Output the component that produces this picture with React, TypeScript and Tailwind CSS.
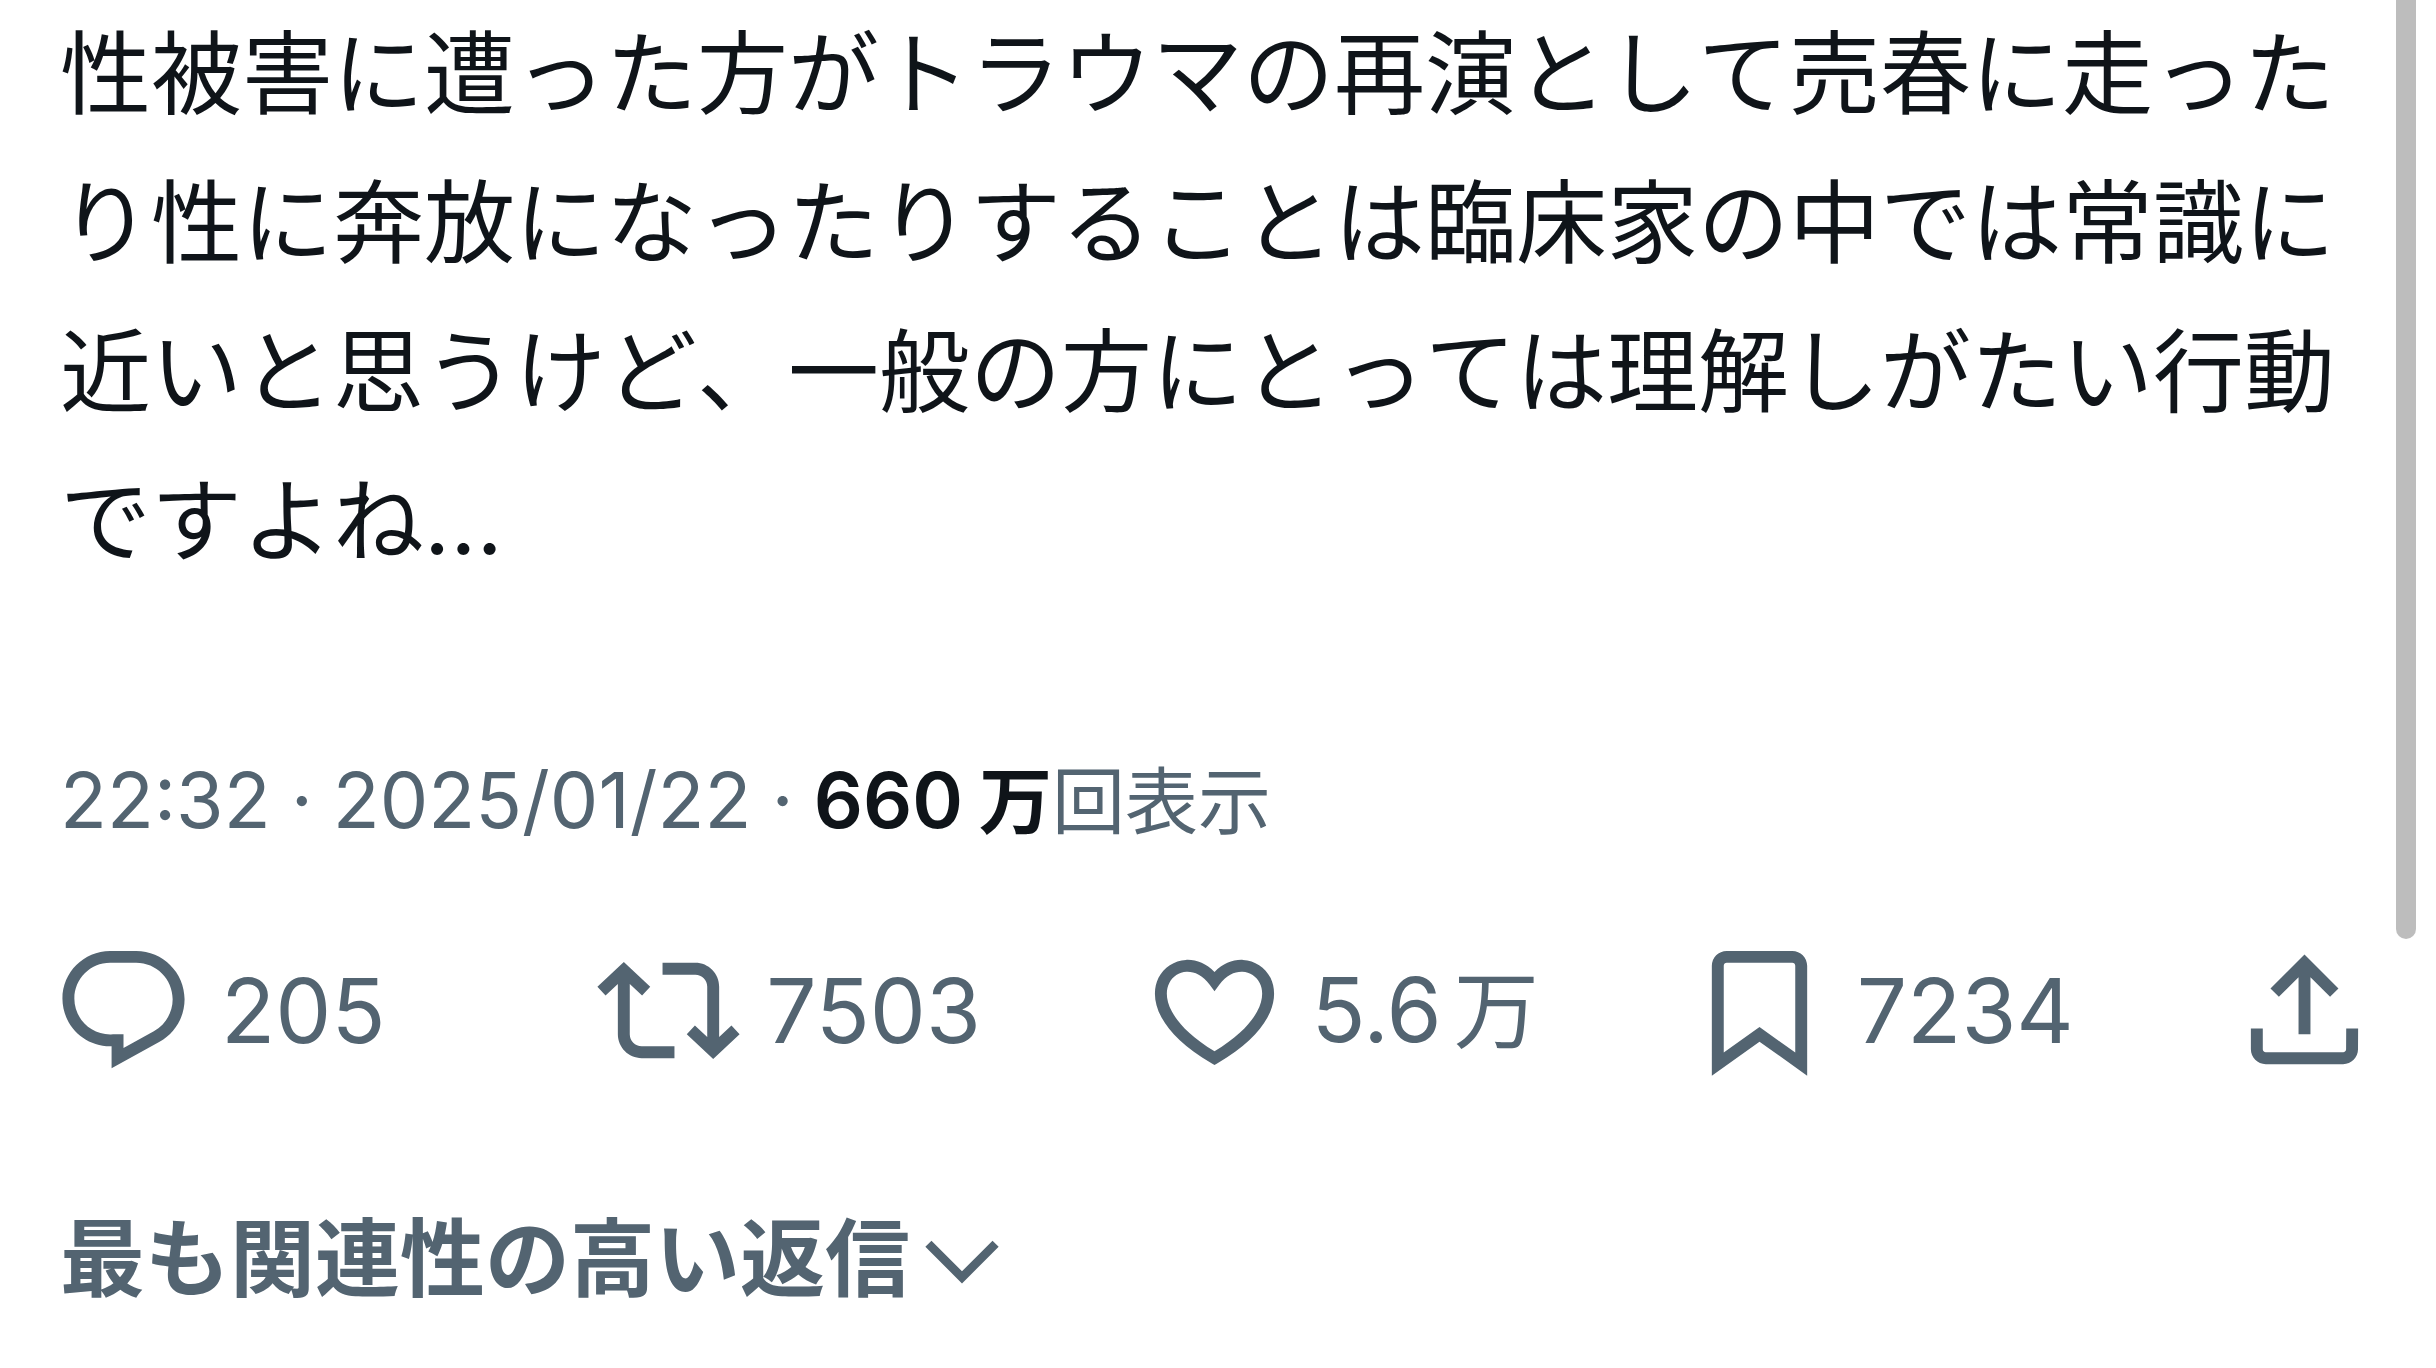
import { clsx } from 'clsx'

const ICONS = {
    reply: 'M1.751 10c0-4.42 3.584-8 8.005-8h4.366c4.49 0 8.129 3.64 8.129 8.13 0 2.96-1.607 5.68-4.196 7.11l-8.054 4.46v-3.69h-.067c-4.49.1-8.183-3.51-8.183-8.01zm8.005-6c-3.317 0-6.005 2.69-6.005 6 0 3.37 2.77 6.08 6.138 6.01l.351-.01h1.761v2.3l5.087-2.81c1.951-1.08 3.163-3.13 3.163-5.36 0-3.39-2.744-6.13-6.129-6.13H9.756z',
    repost: 'M4.5 3.88l4.432 4.14-1.364 1.46L5.5 7.55V16c0 1.1.896 2 2 2H13v2H7.5c-2.209 0-4-1.79-4-4V7.55L1.432 9.48.068 8.02 4.5 3.88zM16.5 6H11V4h5.5c2.209 0 4 1.79 4 4v8.45l2.068-1.93 1.364 1.46-4.432 4.14-4.432-4.14 1.364-1.46 2.068 1.93V8c0-1.1-.896-2-2-2z',
    like: 'M16.697 5.5c-1.222-.06-2.679.51-3.89 2.16l-.805 1.09-.806-1.09C9.984 6.01 8.526 5.44 7.304 5.5c-1.243.07-2.349.78-2.91 1.91-.552 1.12-.633 2.78.479 4.82 1.074 1.97 3.257 4.27 7.129 6.61 3.87-2.34 6.052-4.64 7.126-6.61 1.111-2.04 1.03-3.7.477-4.82-.561-1.13-1.666-1.84-2.908-1.91zm4.187 7.69c-1.351 2.48-4.001 5.12-8.379 7.67l-.503.3-.504-.3c-4.379-2.55-7.029-5.19-8.382-7.67-1.36-2.5-1.41-4.86-.514-6.67.887-1.79 2.647-2.91 4.601-3.01 1.651-.09 3.368.56 4.798 2.01 1.429-1.45 3.146-2.1 4.796-2.01 1.954.1 3.714 1.22 4.601 3.01.896 1.81.846 4.17-.514 6.67z',
    bookmark: 'M4 4.5C4 3.12 5.119 2 6.5 2h11C18.881 2 20 3.12 20 4.5v18.44l-8-5.71-8 5.71V4.5zM6.5 4c-.276 0-.5.22-.5.5v14.56l6-4.29 6 4.29V4.5c0-.28-.224-.5-.5-.5h-11z',
    share: 'M12 2.59l5.7 5.7-1.41 1.42L13 6.41V16h-2V6.41l-3.3 3.3-1.41-1.42L12 2.59zM21 15l-.02 3.51c0 1.38-1.12 2.49-2.5 2.49H5.5C4.11 21 3 19.88 3 18.5V15h2v3.5c0 .28.22.5.5.5h12.98c.28 0 .5-.22.5-.5L19 15h2z',
    chevron: 'M3.543 8.96l1.414-1.42L12 14.59l7.043-7.05 1.414 1.42L12 17.41 3.543 8.96z',
}

interface IconProps {
    name: keyof typeof ICONS
    className: string
}

function Icon({ name, className }: IconProps) {
    return (
        <svg viewBox="0 0 24 24" aria-hidden="true" className={clsx('shrink-0 fill-current', className)}>
            <path d={ICONS[name]} />
        </svg>
    )
}

interface ActionProps {
    icon: keyof typeof ICONS
    label: string
    count?: string
    unit?: string
}

function Action({ icon, label, count, unit }: ActionProps) {
    return (
        <button
            type="button"
            aria-label={label}
            className={clsx('flex items-center gap-[26px] text-left', count && 'flex-1')}
        >
            <Icon name={icon} className="size-[143px]" />
            {count && (
                <span className="flex items-baseline gap-3 text-[89px] leading-[143px]">
                    {count}
                    {unit && <span className="text-[85px]">{unit}</span>}
                </span>
            )}
        </button>
    )
}

export default function App() {
    return (
        <div className="flex min-h-screen items-start bg-white font-['Inter','Noto_Sans_CJK_JP',sans-serif] text-[#536471]">
            <article lang="ja" className="min-w-0 flex-1 pl-[60px]">
                <p className="text-[91px] leading-[149px] text-[#0f1419] [font-kerning:none]">
                    性被害に遭った方がトラウマの再演として売春に走ったり性に奔放になったりすることは臨床家の中では常識に近いと思うけど、一般の方にとっては理解しがたい行動ですよね...
                </p>

                <div className="mt-[148px] flex items-baseline gap-5 text-[77px] leading-[112px]">
                    <time dateTime="22:32">22:32</time>
                    <span>·</span>
                    <time dateTime="2025-01-22">2025/01/22</time>
                    <span>·</span>
                    <a href="#views" className="flex items-baseline">
                        <span className="font-semibold text-[#0f1419]">660</span>
                        <span className="ml-4 text-[73px] font-bold text-[#0f1419]">万</span>
                        <span className="text-[73px]">回表示</span>
                    </a>
                </div>

                <div role="group" className="-ml-2 mt-20 mr-5 flex">
                    <Action icon="reply" label="205 件の返信" count="205" />
                    <Action icon="repost" label="7503 件のリポスト" count="7503" />
                    <Action icon="like" label="5.6万 件のいいね" count="5.6" unit="万" />
                    <Action icon="bookmark" label="7234 件のブックマーク" count="7234" />
                    <Action icon="share" label="共有" />
                </div>

                <button type="button" className="mt-[125px] flex items-center">
                    <span className="text-[85px] leading-[104px] font-bold">最も関連性の高い返信</span>
                    <Icon name="chevron" className="size-[104px]" />
                </button>
            </article>

            {/* scroll thumb */}
            <div className="mr-5 h-[939px] w-5 shrink-0 rounded-b-full bg-[#bdbdbd]" />
        </div>
    )
}
